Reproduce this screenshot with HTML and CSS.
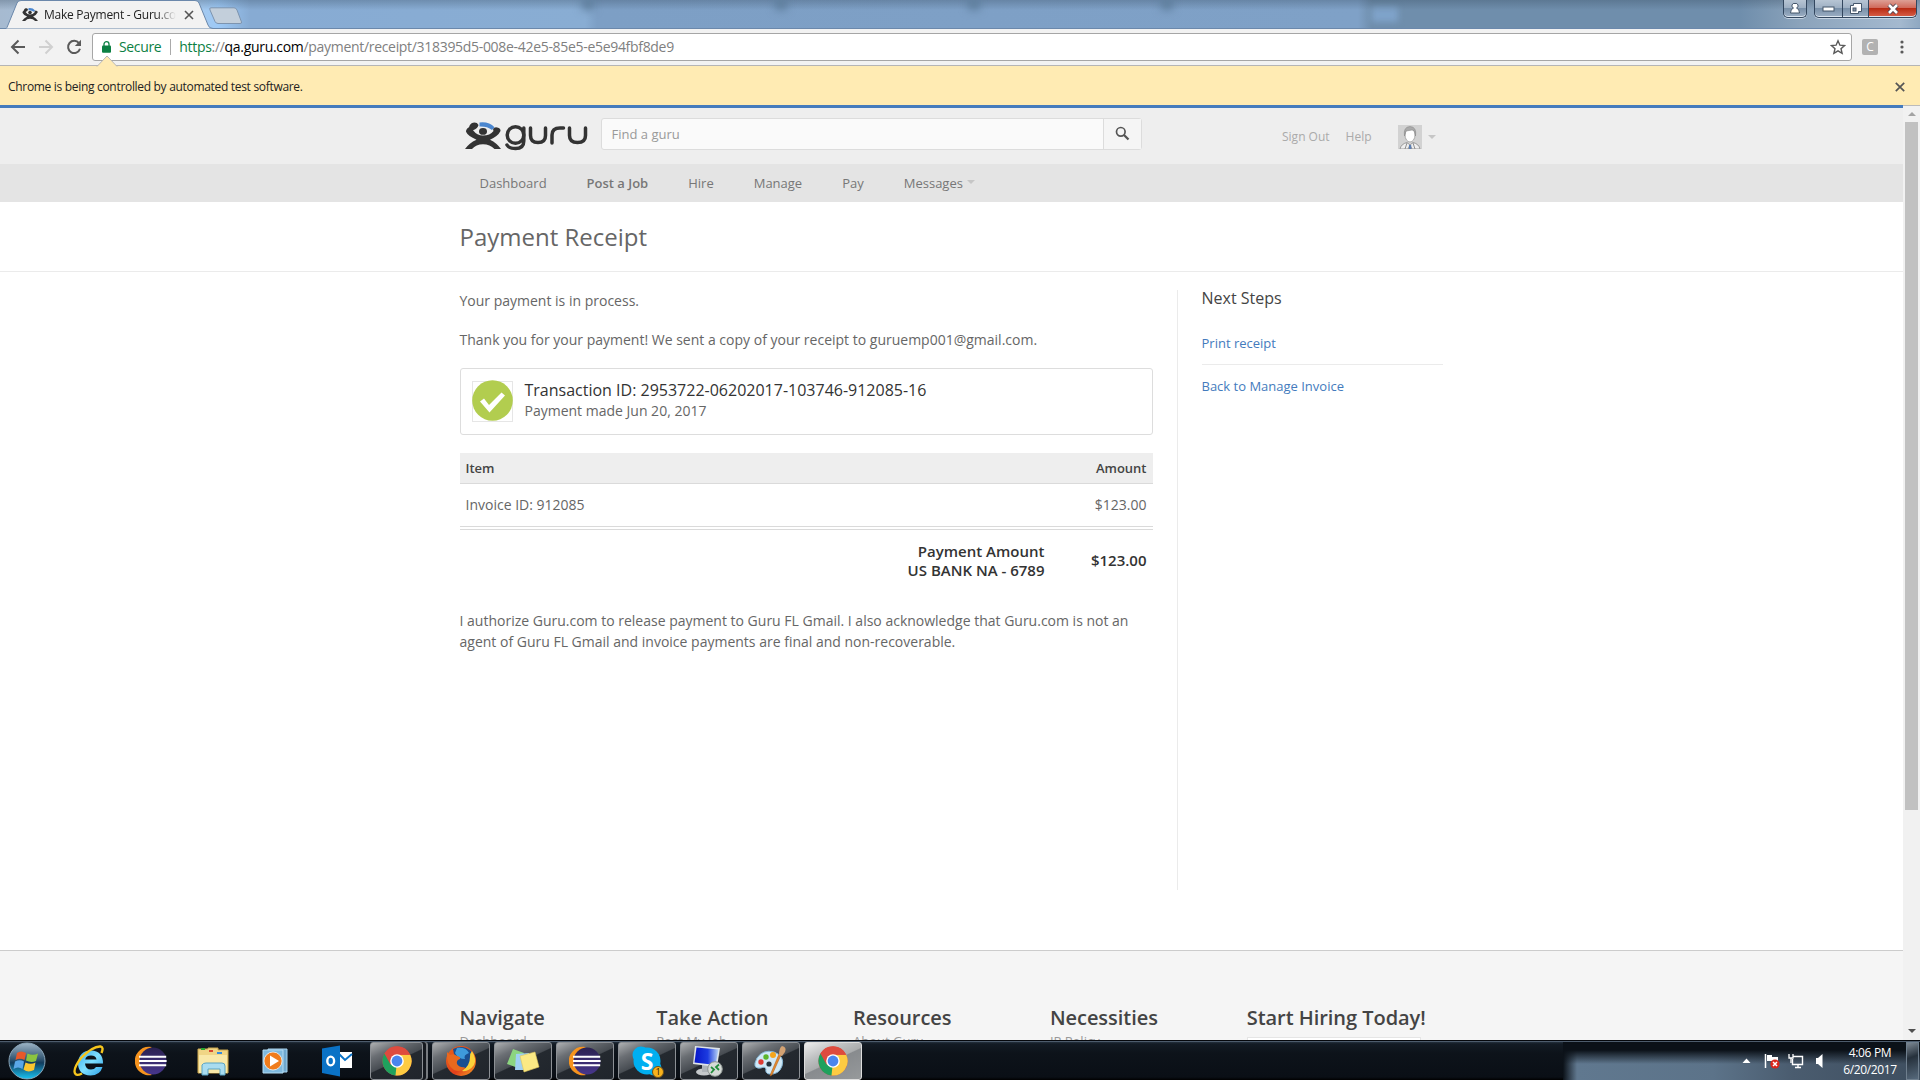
FILE: index.html
```html
<!DOCTYPE html>
<html lang="en">
<head>
<meta charset="utf-8">
<title>Make Payment - Guru.com</title>
<link rel="stylesheet" href="styles.css">
</head>
<body>
<svg class="defs" width="0" height="0">
  <defs>
    <linearGradient id="orb" x1="0" y1="0" x2="0" y2="1"><stop offset="0" stop-color="#9db4c6"/><stop offset=".45" stop-color="#335672"/><stop offset=".55" stop-color="#123c5e"/><stop offset="1" stop-color="#19c4f2"/></linearGradient>
    <linearGradient id="ieBlue" x1="0" y1="0" x2="1" y2="1"><stop offset="0" stop-color="#39a9ec"/><stop offset=".5" stop-color="#7fe0ff"/><stop offset="1" stop-color="#2b9fe6"/></linearGradient>
    <linearGradient id="ecl" x1="0" y1="0" x2="0" y2="1"><stop offset="0" stop-color="#2b2250"/><stop offset="1" stop-color="#47368c"/></linearGradient>
    <linearGradient id="screen" x1="0" y1="0" x2="1" y2="0"><stop offset="0" stop-color="#0716c8"/><stop offset=".55" stop-color="#1c3be0"/><stop offset="1" stop-color="#b9d4f5"/></linearGradient>
    <linearGradient id="fox" x1="0" y1="0" x2="1" y2="1"><stop offset="0" stop-color="#e8651b"/><stop offset=".6" stop-color="#e2401b"/><stop offset="1" stop-color="#f7a823"/></linearGradient>
    <symbol id="guruMan" viewBox="0 0 36 36" preserveAspectRatio="none">
      <path d="M14.500 .5Q24 -1 29.500 7L27 10.500Q22 5.500 14.500 6Z" fill="#4a86cf"/>
      <ellipse cx="18" cy="12.500" rx="4" ry="4.600" fill="#333"/>
      <path d="M8 1Q12 0 13.500 4Q13 8.500 8 11Q12 18 18 18Q25 18 28.500 12Q27 8 31 7Q36 8 35.500 12Q33 19 25 23.500Q32 28 36 36H29.500Q25 29.500 18 29.500Q11 29.500 7 36H0Q4 28 11.500 23.500Q3 19 1 13Q1 9 4 7Q5 2 8 1Z" fill="#333"/>
    </symbol>
    <symbol id="chrome" viewBox="0 0 30 30">
      <circle cx="15" cy="15" r="14.500" fill="#de4b3e"/>
      <path d="M15 15L2.500 7.500A14.500 14.500 0 0 0 13.500 29.400L20 18Z" fill="#1fa15d"/>
      <path d="M15 15L13.500 29.400A14.500 14.500 0 0 0 28.200 8.800H15Z" fill="#fdcb42"/>
      <path d="M15 15L8.500 18.500L2.400 7.600A14.500 14.500 0 0 1 28.100 8.700H15Z" fill="#de4b3e"/>
      <circle cx="15" cy="15" r="6.800" fill="#fff"/><circle cx="15" cy="15" r="5.400" fill="#4a85ee"/>
    </symbol>
    <symbol id="eclipse" viewBox="0 0 32 30">
      <path d="M17 1A14.300 14.300 0 1 0 17 29A16 16 0 0 1 17 1Z" fill="#f7941e"/>
      <circle cx="18" cy="15" r="13.500" fill="url(#ecl)"/>
      <path d="M4 10.800H31.200M4 15H31.600M4 19.200H31.200" stroke="#fff" stroke-width="1.900"/>
    </symbol>
  </defs>
</svg>

<div class="desktop">
  <header class="titlebar">
    <div class="ghost-tabs"><i></i><i></i><i></i><i></i></div>
    <div class="ghost-button"></div>
    <div class="tab">
      <svg class="tab-shape" width="210" height="29" viewBox="0 0 210 29"><path d="M0 28.500Q1 28 2 25L11 3Q12 .5 15 .5H189Q192 .5 193 3L202 25Q203 28.500 207 28.500V29H0Z" fill="#f2f2f2" stroke="#6b88ab"/></svg>
      <svg class="favicon" width="16" height="13"><use href="#guruMan" width="16" height="13"/></svg>
      <span class="tab-title">Make Payment - Guru.com</span>
      <svg class="tab-close" width="10" height="10" viewBox="0 0 10 10"><path d="M1 1L9 9M9 1L1 9" stroke="#555" stroke-width="1.600"/></svg>
    </div>
    <svg class="new-tab" width="36" height="18" viewBox="0 0 36 18"><path d="M3 .8H26Q28 .8 29 3L33.500 15Q34 16.500 32 16.500H10Q8 16.500 7 14.500L2 3Q1 .8 3 .8Z" fill="#c3cfdb" stroke="#7d94af"/></svg>
    <div class="window-buttons">
      <span class="wbtn user"><svg width="12" height="14" viewBox="0 0 12 14"><path d="M6 1.500A2.300 2.300 0 0 1 7.500 6Q10.500 7 10.500 11H1.500Q1.500 7 4.500 6A2.300 2.300 0 0 1 6 1.500Z" fill="#fff" stroke="#45566b"/></svg></span>
      <span class="wgroup">
        <span class="wbtn min"><svg width="14" height="8" viewBox="0 0 14 8"><rect x="1" y="2" width="11" height="4" fill="#fff" stroke="#45566b"/></svg></span>
        <span class="wbtn max"><svg width="14" height="13" viewBox="0 0 14 13"><path d="M4.500 1.500H12.500V9.500H9.500V11.500H1.500V3.500H4.500Z" fill="#fff" stroke="#45566b"/><rect x="4" y="6" width="3" height="3" fill="#8593a5" stroke="#45566b"/></svg></span>
        <span class="wbtn close"><svg width="14" height="12" viewBox="0 0 14 12"><path d="M3 2L11 10M11 2L3 10" stroke="#4c4350" stroke-width="4.400"/><path d="M3 2L11 10M11 2L3 10" stroke="#fff" stroke-width="2.600"/></svg></span>
      </span>
    </div>
  </header>

  <div class="toolbar">
    <svg width="16" height="16" viewBox="0 0 16 16" fill="none" stroke="#5a5a5a" stroke-width="2"><path d="M15 8H2.500M8.500 1.500L2 8L8.500 14.500"/></svg>
    <svg width="16" height="16" viewBox="0 0 16 16" fill="none" stroke="#d0d0d0" stroke-width="2"><path d="M1 8H13.500M7.500 1.500L14 8L7.500 14.500"/></svg>
    <svg width="16" height="16" viewBox="0 0 16 16"><path d="M13 4.200A6.100 6.100 0 1 0 14 9.800" fill="none" stroke="#5a5a5a" stroke-width="2"/><path d="M15 .8V7H8.800Z" fill="#5a5a5a"/></svg>
    <div class="omnibox">
      <svg class="lock" width="9" height="12" viewBox="0 0 9 12"><rect y="4.500" width="9" height="7.200" rx="1" fill="#0b8043"/><path d="M2 5V3A2.500 2.300 0 0 1 7 3V5" fill="none" stroke="#0b8043" stroke-width="1.300"/></svg>
      <span class="secure">Secure</span>
      <span class="url"><b>https</b>://<em>qa.guru.com</em>/payment/receipt/318395d5-008e-42e5-85e5-e5e94fbf8de9</span>
      <svg class="star" width="16" height="16" viewBox="0 0 16 16"><path d="M8 1.800L9.900 6.200L14.500 6.600L11 9.700L12.100 14.300L8 11.800L3.900 14.300L5 9.700L1.500 6.600L6.100 6.200Z" fill="none" stroke="#5a5a5a" stroke-width="1.400"/></svg>
    </div>
    <span class="ext">C</span>
    <svg class="dots" width="4" height="14" viewBox="0 0 4 14" fill="#5a5a5a"><circle cx="2" cy="2" r="1.600"/><circle cx="2" cy="7" r="1.600"/><circle cx="2" cy="12" r="1.600"/></svg>
  </div>

  <div class="infobar">
    <svg class="notch" width="22" height="12" viewBox="0 0 22 12"><path d="M1 11.500L11 1L21 11.500" fill="#ffebb3" stroke="#b5b5b5"/><path d="M1.500 12L11 2L20.500 12Z" fill="#ffebb3"/></svg>
    <span>Chrome is being controlled by automated test software.</span>
    <svg width="10" height="10" viewBox="0 0 10 10"><path d="M.8 .8L9.200 9.200M9.200 .8L.8 9.200" stroke="#555" stroke-width="1.700"/></svg>
  </div>

  <div class="viewport">
    <div class="page">
      <div class="site-header">
        <div class="wrap">
          <div class="logo">
            <svg width="124" height="30" viewBox="0 0 124 30"><use href="#guruMan" x="0" y="0" width="36" height="27"/>
              <g fill="none" stroke="#333" stroke-width="3.500" stroke-linecap="round"><circle cx="50.500" cy="13" r="8.300"/><path d="M58.800 6V19Q58.800 26.500 50.500 26.500Q44 26.500 42 23M65.500 6V13.500Q65.500 20.500 73 20.500Q80.500 20.500 80.500 13.500V6M87 21V13Q87 6 95 6H98.500M104.500 6V13.500Q104.500 20.500 112.500 20.500Q120.500 20.500 120.500 13.500V6"/></g>
            </svg>
          </div>
          <div class="search"><span>Find a guru</span><div class="search-btn"><svg width="15" height="15" viewBox="0 0 15 15" fill="none" stroke="#555"><circle cx="5.800" cy="5.800" r="4.300" stroke-width="1.700"/><path d="M9 9L13.500 13.500" stroke-width="2.300"/></svg></div></div>
          <div class="account"><a>Sign Out</a><a>Help</a>
            <svg class="avatar" width="24" height="24" viewBox="0 0 24 24"><rect width="24" height="24" fill="#d2d2d2"/><path d="M2 24Q3 19 9 17.500L12 20L15 17.500Q21 19 22 24Z" fill="#eee" stroke="#8a8a8a" stroke-width=".8"/><ellipse cx="12" cy="10" rx="5" ry="7" fill="#fff" stroke="#999" stroke-width=".8"/><path d="M6.500 11Q5 2 12 1.500Q19 2 17.500 11Q17 5 14 5L8 6Z" fill="#aaa" stroke="#888" stroke-width=".6"/><path d="M9 18L7 24M15 18L17 24M10 24L12 20L14 24" stroke="#777" stroke-width=".8" fill="none"/><rect x="11" y="20" width="2.200" height="4" fill="#5b7fb5"/></svg>
            <i class="caret"></i>
          </div>
        </div>
      </div>
      <nav class="site-nav"><div class="wrap"><a>Dashboard</a><a class="strong">Post a Job</a><a>Hire</a><a>Manage</a><a>Pay</a><a class="msg">Messages<i class="caret"></i></a></div></nav>
      <div class="page-title"><div class="wrap"><h1>Payment Receipt</h1></div></div>
      <div class="wrap content">
        <main>
          <p>Your payment is in process.</p>
          <p class="sent">Thank you for your payment! We sent a copy of your receipt to guruemp001@gmail.com.</p>
          <div class="card">
            <svg width="42" height="43" viewBox="0 0 42 43"><rect x=".5" y="2.500" width="40" height="40" fill="none" stroke="#e6e6e6"/><circle cx="20.500" cy="21.500" r="20.300" fill="#b2cd4f"/><path d="M8 22.500L12 19.500L17 26L29.500 13.500L33 16.500L17.500 33.500Z" fill="#fff"/></svg>
            <div><h2>Transaction ID: 2953722-06202017-103746-912085-16</h2><div class="made">Payment made Jun 20, 2017</div></div>
          </div>
          <div class="receipt">
            <div class="row head"><span>Item</span><span>Amount</span></div>
            <div class="row item"><span>Invoice ID: 912085</span><span>$123.00</span></div>
            <div class="row total"><div class="method">Payment Amount<br>US BANK NA - 6789</div><span>$123.00</span></div>
          </div>
          <p class="authorize">I authorize Guru.com to release payment to Guru FL Gmail. I also acknowledge that Guru.com is not an<br>agent of Guru FL Gmail and invoice payments are final and non-recoverable.</p>
        </main>
        <aside><h3>Next Steps</h3><a>Print receipt</a><a>Back to Manage Invoice</a></aside>
      </div>
      <footer><div class="wrap">
        <section><h4>Navigate</h4><a>Dashboard</a></section>
        <section><h4>Take Action</h4><a>Post My Job</a></section>
        <section><h4>Resources</h4><a>About Guru</a></section>
        <section><h4>Necessities</h4><a>IP Policy</a></section>
        <section><h4>Start Hiring Today!</h4><div class="field"></div></section>
      </div></footer>
    </div>
    <div class="scrollbar"><i class="up"></i><div class="thumb"></div><i class="down"></i></div>
  </div>

  <div class="taskbar">
    <span class="pin"><svg width="40" height="38" viewBox="0 0 40 38"><circle cx="20" cy="19" r="18" fill="url(#orb)" stroke="#8aa5b8"/><path d="M10 11Q14 8 19 11L17.500 18Q13 15.500 8.500 18Z" fill="#e8582a"/><path d="M20.500 11.500Q26 14 31 11.500L29 19Q24 21 19 18.500Z" fill="#8cc43f"/><path d="M8 19.500Q13 17 17 19.500L15.500 27Q11 24 6.500 27Z" fill="#5aa7e8"/><path d="M18.500 20.500Q24 23 28.500 20.500L27 28Q21 31 16.500 27.500Z" fill="#fcc62e"/></svg></span>
    <span class="pin"><svg width="32" height="32" viewBox="0 0 32 32"><path d="M30 18.500H12Q12.500 24.500 18 24.500Q21.500 24.500 23 22H29.500Q27 30.500 17.500 30.500Q5 30 5 18Q6 5.500 18 5.500Q30 6 30 18.500ZM23.500 14.500Q23 10.500 18 10.500Q13 10.500 12.200 14.500Z" fill="url(#ieBlue)" fill-rule="evenodd"/><path d="M28.500 8Q31 2 27.500 1.500Q20 1 8 13Q-1 25 2.500 29Q4 31 9 28.500" fill="none" stroke="#f6c51c" stroke-width="2.400"/></svg></span>
    <span class="pin"><svg width="32" height="30"><use href="#eclipse"/></svg></span>
    <span class="pin"><svg width="34" height="32" viewBox="0 0 34 32"><path d="M2 4H12V3H22V5H32V28H2Z" fill="#f0d585" stroke="#c9a650"/><path d="M3 10H31V28H3Z" fill="#f9e8a8"/><path d="M5 3H9V5H5Z" fill="#2aa52f"/><path d="M13 5H17V7H13Z" fill="#d9482f"/><path d="M21 7H26V9H21Z" fill="#338be0"/><path d="M6 20Q7 18 10 18H26Q29 18 29 21V30H24V24H12V30H6Z" fill="#a9dcf0" stroke="#5ba4c4"/></svg></span>
    <span class="pin"><svg width="28" height="28" viewBox="0 0 28 28"><path d="M7 2H26V25H7Z" fill="#6fa7cd" stroke="#a9d4ef"/><path d="M2 3H22V26H2Z" fill="#7fb9de" stroke="#b4dbf2"/><circle cx="12" cy="14" r="9" fill="#f07c1c" stroke="#fff" stroke-width=".7"/><path d="M9 8.500L18 14L9 19.500Z" fill="#fff"/></svg></span>
    <span class="pin"><svg width="32" height="32" viewBox="0 0 32 32"><path d="M18 7H31V23H18Z" fill="#fff"/><path d="M18 9L24 15L31 9" fill="none" stroke="#0a72c6" stroke-width="2"/><path d="M1 3.500L19 .5V31.500L1 28Z" fill="#0a72c6"/><ellipse cx="9.700" cy="16" rx="3.400" ry="4.400" fill="none" stroke="#fff" stroke-width="2.400"/></svg></span>
    <span class="task stacked"><svg width="30" height="30"><use href="#chrome"/></svg></span>
    <span class="task"><svg width="32" height="32" viewBox="0 0 32 32"><circle cx="16" cy="16" r="15" fill="url(#fox)"/><path d="M8 4Q18 -1 26 6Q32 14 27 22L20 23Q12 24 10 17Q12 13 9 9Z" fill="#1a4f91"/><path d="M12 3Q21 2 24 8Q18 10 20 14Q13 14 10 8Z" fill="#3e9bdc"/><path d="M27 6Q32 14 29 20Q24 27 17 26Q25 21 25 12Q25 8 27 6Z" fill="#fbd13a"/><path d="M2 7L5 10Q9 8 12 11Q16 12 15 14Q11 15 12 19Q15 23 20 22Q16 28 9 25Q1 20 2 7Z" fill="#e9691e"/></svg></span>
    <span class="task"><svg width="34" height="30" viewBox="0 0 34 30"><path d="M7 3L18 7L12 22L1 18Z" fill="#8cd57f"/><path d="M10 8L23 7L23 24L9 24Z" fill="#9fd0f2"/><path d="M14 10L29 6L33 21L18 26Z" fill="#fbe984" stroke="#dcc45b" stroke-width=".6"/></svg></span>
    <span class="task"><svg width="32" height="30"><use href="#eclipse"/></svg></span>
    <span class="task"><svg width="32" height="32" viewBox="0 0 32 32"><circle cx="10" cy="10" r="8.500" fill="#00aff0"/><circle cx="16" cy="16" r="13.500" fill="#00aff0"/><circle cx="23" cy="23" r="7.500" fill="#00aff0"/></svg><b class="skype">S</b><i class="badge">1</i></span>
    <span class="task"><svg width="34" height="32" viewBox="0 0 34 32"><ellipse cx="12" cy="27" rx="8" ry="3.500" fill="#c5c9cc"/><path d="M10 20H17V27H10Z" fill="#aeb4b9"/><path d="M3 1L28 3L25 22L1 19Z" fill="#dfe4e8"/><path d="M4.500 2.500L26.500 4.500L23.500 20L2.500 17.500Z" fill="url(#screen)"/><circle cx="23" cy="24" r="7.300" fill="#d5dad6" stroke="#8c9491"/><path d="M19 22L22 24.500L19 28M27 19.500L24 22L27 25" fill="none" stroke="#218c3b" stroke-width="1.800"/></svg></span>
    <span class="task"><svg width="34" height="32" viewBox="0 0 34 32"><path d="M3 13Q9 4 20 7Q31 11 28 21Q25 30 15 29Q11 28 12 24Q11 21 7 23Q0 24 1 18Z" fill="#cfe8f7" stroke="#86b7d6"/><circle cx="7" cy="17" r="2.700" fill="#dd3c35"/><circle cx="12" cy="12" r="2.700" fill="#5bb52d"/><circle cx="19" cy="10" r="3" fill="#f5a51c"/><circle cx="15" cy="19" r="2.600" fill="#22333f"/><path d="M27 10L18 30L16 31L17 28L25 9Z" fill="#e58a2e" stroke="#a85a17" stroke-width=".5"/><path d="M25 10Q25 3 28 1Q33 2 31 7L28 11Z" fill="#d3a273"/></svg></span>
    <span class="task active"><svg width="30" height="30"><use href="#chrome"/></svg></span>
    <div class="tray">
      <svg width="9" height="6" viewBox="0 0 9 6"><path d="M4.500 .5L8.500 5H.5Z" fill="#fff"/></svg>
      <svg width="16" height="16" viewBox="0 0 16 16"><path d="M1.500 1V15" stroke="#fff" stroke-width="1.500"/><path d="M3 2H8V4H14V9H8V8H3Z" fill="#fff"/><circle cx="11" cy="11" r="4.600" fill="#d9261c"/><path d="M9 9L13 13M13 9L9 13" stroke="#fff" stroke-width="1.500"/></svg>
      <svg width="16" height="16" viewBox="0 0 16 16"><path d="M5 3.500H14.500V11.500H4.500V6M7 14.500H13M10 12V14" fill="none" stroke="#fff" stroke-width="1.400"/><path d="M1 1V5H5V1M3 5V10" fill="none" stroke="#fff" stroke-width="1.300"/></svg>
      <svg width="8" height="14" viewBox="0 0 8 14"><path d="M0 4H2L6.500 0V14L2 10H0Z" fill="#fff"/></svg>
      <div class="clock"><span>4:06 PM</span><span>6/20/2017</span></div>
      <div class="show-desktop"></div>
    </div>
  </div>
</div>
</body>
</html>
```
FILE: styles.css
```css
* { box-sizing: border-box; }
body { margin: 0; font-family: "Open Sans", sans-serif; color: #666; font-size: 14px; }
h1, h2, h3, h4, p { margin: 0; font-weight: 400; }
svg { display: block; flex: none; }
.defs { position: absolute; }
.desktop { width: 1920px; height: 1080px; display: flex; flex-direction: column; overflow: hidden; }

/* window frame */
.titlebar { position: relative; height: 29px; flex: none; display: flex; align-items: flex-start; padding-left: 6px; border-bottom: 1px solid #6b88ab;
  background: linear-gradient(rgba(50,70,90,.3), rgba(50,70,90,0) 10px), linear-gradient(90deg, #a6bad0 0, #a5c9ee 200px, #9dc9f6 218px, #87abd3 250px, #89add3 585px, #7d9fc5 597px, #7fa1c7 1358px, #6f8eac 1372px, #6f8eac 1740px, #8ba3bb 1800px, #a4b9cf 1900px, #8fa8c1); }
.ghost-tabs { position: absolute; left: 582px; top: -4px; display: flex; gap: 181px; }
.ghost-tabs i { width: 12px; height: 14px; background: #5f7f9e; filter: blur(4px); }
.ghost-button { position: absolute; left: 1372px; top: 8px; width: 26px; height: 14px; background: #7fa3ca; filter: blur(3px); }
.tab { position: relative; width: 206px; height: 29px; padding: 0 12px 0 16px; display: flex; align-items: center; flex: none; }
.tab-shape { position: absolute; left: 0; top: 0; }
.favicon, .tab-title, .tab-close { position: relative; }
.tab-title { margin-left: 6px; width: 132px; overflow: hidden; white-space: nowrap; font-size: 12px; color: #222; letter-spacing: -.25px;
  -webkit-mask-image: linear-gradient(90deg, #000 112px, transparent 132px); mask-image: linear-gradient(90deg, #000 112px, transparent 132px); }
.tab-close { margin-left: 8px; }
.new-tab { margin: 7px 0 0 -4px; z-index: 1; }
.window-buttons { margin-left: auto; display: flex; gap: 7px; padding-right: 3px; }
.wgroup { display: flex; }
.wbtn { height: 18px; display: flex; align-items: center; justify-content: center; border: 1px solid #33475f; border-top: 0; background: linear-gradient(#b7c5d4, #9caec2 50%, #7990a9 50%, #9cafc4); box-shadow: inset 0 -1px #dce6f0, 0 1px #c5d3e2; }
.user { width: 24px; border-radius: 0 0 5px 5px; }
.min { width: 29px; border-radius: 0 0 0 5px; }
.max { width: 26px; border-left: 0; }
.close { width: 48px; border-left: 0; border-radius: 0 0 5px 0; background: linear-gradient(#dda095, #cf6555 50%, #b92c14 50%, #d9614a); }

.toolbar { height: 36px; flex: none; display: flex; align-items: center; gap: 12px; padding: 0 16px 0 10px; background: #f2f2f2; }
.omnibox { flex: 1; margin: 0 0 0 -2px; height: 28px; display: flex; align-items: center; border: 1px solid #a6a6a6; border-radius: 3px; background: #fff; padding: 0 5px 0 9px; font-size: 14px; }
.secure { margin-left: 8px; color: #0b8043; height: 16px; line-height: 16px; padding-right: 9px; border-right: 1px solid #aaa; letter-spacing: -.35px; }
.url { margin-left: 8px; color: #808080; letter-spacing: -.31px; line-height: 18px; padding-bottom: 1px; }
.url b { color: #0b8043; font-weight: 400; }
.url em { color: #000; font-style: normal; }
.star { margin-left: auto; }
.ext { width: 16px; height: 16px; margin-left: -2px; border-radius: 2px; background: #b2b2b2; color: #fff; font-size: 12px; line-height: 16px; text-align: center; }
.dots { margin: 0 0 0 10px; }
.infobar { position: relative; height: 40px; flex: none; border-top: 1px solid #b5b5b5; background: #ffebb3; display: flex; align-items: center; justify-content: space-between; padding: 2px 15px 0 8px; color: #222; font-size: 12px; letter-spacing: -.31px; }
.notch { position: absolute; left: 96px; top: -11px; }

/* site */
.viewport { height: 935px; flex: none; display: flex; overflow: hidden; }
.page { width: 1903px; height: 935px; overflow: hidden; background: #fff; border-top: 3px solid #447bbd; }
.wrap { width: 984px; margin: 0 auto; display: flex; }
.site-header { height: 56px; background: #eee; }
.site-header .wrap { align-items: flex-start; }
.logo { width: 141.500px; padding: 14px 0 0 5.500px; }
.search { width: 541px; height: 32px; margin-top: 10px; display: flex; border: 1px solid #dcdcdc; border-radius: 3px; background: #fafafa; font-size: 13px; line-height: 31px; color: #999; padding-left: 9.500px; justify-content: space-between; }
.search-btn { width: 38px; border-left: 1px solid #dcdcdc; background: #f5f5f5; display: flex; align-items: center; justify-content: center; padding-bottom: 1px; }
.account { margin-left: 140px; padding-top: 16px; height: 41px; display: flex; align-items: center; font-size: 12px; color: #aaa; }
.account a { margin-top: -1px; }
.account a + a { margin-left: 16px; }
.avatar { margin: 0 6px 0 26px; }
.caret { display: inline-block; border: 4px solid transparent; border-top-color: #c6c6c6; border-bottom: 0; }
.site-nav { height: 38px; background: #e4e4e4; font-size: 13px; line-height: 38px; color: #777; }
.site-nav a { padding: 0 20px; }
.strong { font-weight: 600; }
.msg .caret { margin-left: 4px; vertical-align: 4px; }
.page-title { height: 70px; border-bottom: 1px solid #ebebeb; }
h1 { font-size: 24px; line-height: 69px; }
.content { padding-top: 18px; height: 678px; justify-content: space-between; }
main { width: 693px; line-height: 21px; }
.sent { margin-top: 18px; }
.card { margin-top: 18px; height: 67px; border: 1px solid #ddd; border-radius: 3px; display: flex; gap: 11px; padding: 10px 11px; }
h2 { font-size: 16px; line-height: 22px; color: #333; }
.made { line-height: 19px; }
.receipt { margin-top: 18px; }
.row { display: flex; justify-content: space-between; padding: 0 6px; }
.head { height: 31px; line-height: 30px; background: #eee; border-bottom: 1px solid #dadada; font-size: 13px; font-weight: 600; color: #444; }
.item { height: 46px; line-height: 42px; border-bottom: 4px double #dadada; }
.total { padding-top: 12px; height: 80px; font-size: 15px; font-weight: 600; line-height: 19px; color: #333; }
.method { margin-left: auto; text-align: right; }
.total > span { width: 102px; text-align: right; padding-top: 9px; }
aside { width: 267px; height: 600px; border-left: 1px solid #ebebeb; padding: 0 1px 0 24px; display: flex; flex-direction: column; font-size: 13px; color: #447bbd; }
h3 { font-size: 16px; line-height: 16px; color: #444; margin-bottom: 27px; }
aside a { line-height: 20px; }
aside a + a { margin-top: 11px; border-top: 1px solid #ebebeb; padding-top: 11px; }
footer { height: 91px; border-top: 1px solid #ccc; background: #f5f5f5; padding-top: 55px; }
section { width: 196.800px; flex: none; font-size: 13px; line-height: 18px; color: #999; }
h4 { font-size: 20px; line-height: 24px; font-weight: 600; color: #444; margin-bottom: 2px; letter-spacing: -.04px; }
.field { width: 174px; height: 30px; margin-top: 7px; border: 1px solid #e5e5e5; background: #fff; }
.scrollbar { width: 17px; background: #f1f1f1; display: flex; flex-direction: column; align-items: center; border-top: 1px solid #bbb; }
.up { margin-top: 6px; border: 4px solid transparent; border-bottom-color: #a3a3a3; border-top: 0; }
.thumb { width: 13px; height: 688px; margin-top: 6px; background: #c1c1c1; }
.down { margin-top: auto; margin-bottom: 7px; border: 4px solid transparent; border-top-color: #505050; border-bottom: 0; }

/* taskbar */
.taskbar { height: 40px; flex: none; display: flex; align-items: center; padding-top: 1px; border-top: 1px solid #05080d; background: linear-gradient(#75869a, #24303d 1px, #131b24 3px, #0d131a 12px, #0a0f16 36px, #000 39px); }
.pin { width: 62px; display: flex; justify-content: center; }
.pin:first-child { width: 58px; padding-right: 4px; }
.task { width: 58px; height: 38px; margin-right: 4px; position: relative; display: flex; align-items: center; justify-content: center; border: 1px solid #8c9095; border-radius: 3px; background: linear-gradient(155deg, #aeb0b2, #6b6f74 25%, #474c52 49%, #24292f 51%, #20252c); }
.stacked { width: 53px; margin: 0 9px 0 2px; box-shadow: 3px 0 #15191f, 5px 0 #777b80; }
.active { background: linear-gradient(155deg, #eceded, #bfc1c2 30%, #aaacad 49%, #888b8e 51%, #96999b); border-color: #ddd; }
.skype { position: absolute; left: 0; right: 0; top: 4px; text-align: center; color: #fff; font-size: 23px; line-height: 28px; }
.badge { position: absolute; left: 33px; top: 23px; width: 12px; height: 12px; border-radius: 50%; background: #f9b21b; border: 1px solid #6b501a; color: #111; font: 9px/10px "Open Sans", sans-serif; text-align: center; }
.tray { margin-left: auto; width: 357px; height: 39px; display: flex; align-items: center; padding-left: 179px; color: #fff; font-size: 12px;
  background: linear-gradient(#0b1118 8px, rgba(11,17,24,0) 22px), linear-gradient(90deg, #0b1118 0, #60788f 14px, #5c7389 150px, #4a5c6f 230px, #3e4e5f); }
.tray > svg + svg { margin-left: 13px; }
.tray > svg:nth-child(3) { margin-left: 8px; }
.tray > svg:nth-child(4) { margin-left: 12px; }
.clock { margin-left: auto; width: 60px; height: 38px; display: flex; flex-direction: column; align-items: center; line-height: 17px; padding-top: 2px; letter-spacing: -.35px; }
.show-desktop { width: 13px; height: 38px; margin: 0 1px 0 6px; border: 1px solid #6f7f8e; background: linear-gradient(160deg, #7c8792, #26313c 40%, #56697c); }
```
